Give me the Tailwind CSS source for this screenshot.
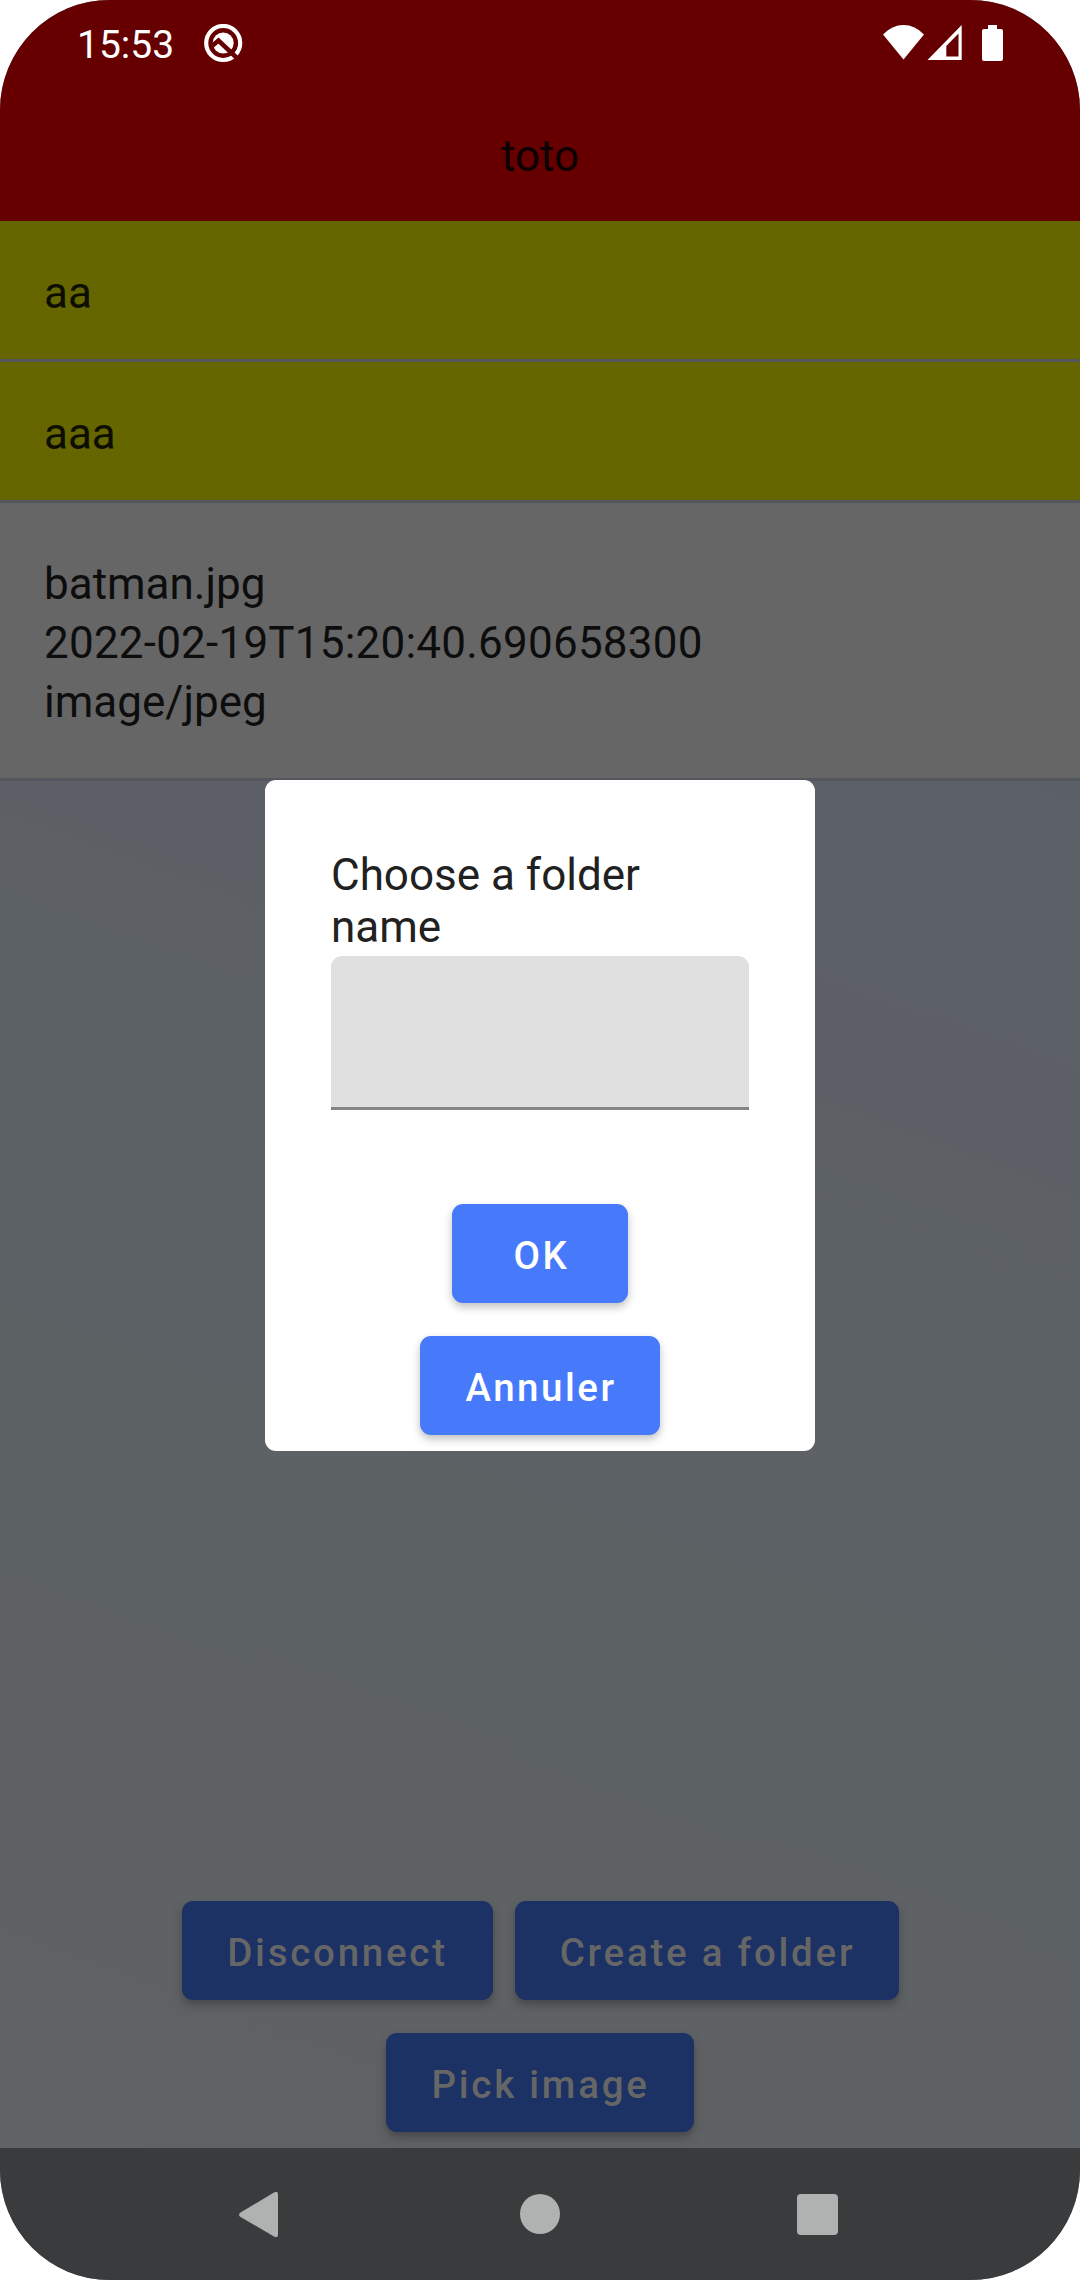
<!DOCTYPE html>
<html lang="fr">
<head>
<meta charset="utf-8">
<title>toto</title>
<script src="https://cdn.jsdelivr.net/npm/@tailwindcss/browser@4"></script>
</head>
<body class="bg-white">
<div class="relative flex h-[2280px] w-[1080px] flex-col overflow-hidden rounded-[110px] bg-linear-200 from-[#5c5f68] from-20% via-[#5d6265] via-65% to-[#606265] to-97% font-['Roboto',sans-serif] text-[44px] leading-[59px] tracking-normal text-[#0d0d0d]">
  <header class="flex h-[221px] flex-col bg-[#660000]">
    <div class="flex h-[88px] items-center pl-[77px] pr-[77px] text-white">
      <span class="w-[98px] pt-[2px] text-[39px] leading-[46px]">15:53</span>
      <svg class="ml-[29px] mb-[2px] size-[39px]" viewBox="0 0 39 39" fill="none">
        <circle cx="19.2" cy="19" r="17" stroke="#fff" stroke-width="4.2"/>
        <circle cx="19.2" cy="19" r="10.500" fill="#fff"/>
        <path d="M7.500 22.500L14.500 16.500L34 35" stroke="#660000" stroke-width="4.500"/>
      </svg>
      <svg class="ml-auto mb-[2px] h-[36px] w-[120px]" viewBox="0 0 120 36" fill="#fff">
        <path d="M0 9.500Q9 0 20.500 0T41 9.500L20.500 34.500Z"/>
        <path fill-rule="evenodd" d="M78.700 0V35H44.500ZM75.500 8.500L63.300 21V31.500H75.500Z"/>
        <path d="M105 0h9v4h4q2 0 2 2v28q0 2-2 2h-17q-2 0-2-2V6q0-2 2-2h4Z"/>
      </svg>
    </div>
    <h1 class="mt-[39px] text-center text-[#0d0000]">toto</h1>
  </header>
  <ul class="flex flex-col">
    <li class="flex h-[141px] items-center border-b-3 border-[#53565c] bg-[#666600] px-[44px] pt-[6px] text-[#0d0d00]">aa</li>
    <li class="flex h-[141px] items-center border-b-3 border-[#53565c] bg-[#666600] px-[44px] pt-[6px] text-[#0d0d00]">aaa</li>
    <li class="flex h-[278px] flex-col justify-center border-b-3 border-[#53565c] bg-[#666666] px-[44px] pt-[6px]">
      <span>batman.jpg</span><span class="tracking-[0.22px]">2022-02-19T15:20:40.690658300</span><span>image/jpeg</span>
    </li>
  </ul>
  <div class="mt-auto flex flex-wrap justify-center gap-x-[22px] gap-y-[33px] px-[150px] pb-[16px] text-[38.5px] font-medium tracking-[2.75px] text-[#666666]">
    <button class="h-[99px] w-[311px] rounded-[11px] bg-[#1c3164] pl-[1px] pt-[3px] shadow-[0_5px_8px_rgba(50,45,50,0.5)]">Disconnect</button>
    <button class="h-[99px] w-[384px] rounded-[11px] bg-[#1c3164] pl-[2px] pt-[3px] shadow-[0_5px_8px_rgba(50,45,50,0.5)]">Create a folder</button>
    <button class="h-[99px] w-[308px] rounded-[11px] bg-[#1c3164] pl-[1px] pt-[3px] shadow-[0_5px_8px_rgba(50,45,50,0.5)]">Pick image</button>
  </div>
  <nav class="flex h-[132px] items-center bg-[#3a3b3d]">
    <svg class="h-[132px] w-[1080px]" viewBox="0 0 1080 132" fill="#b0b1b1">
      <path d="M240.500 64.500L274 44.500Q278 42.500 278 46.500V86.500Q278 90.500 274 88.500L240.500 69Q237.500 67 240.500 64.500Z"/>
      <circle cx="540" cy="66" r="20"/>
      <rect x="797" y="46" width="41" height="41" rx="4"/>
    </svg>
  </nav>

  <div class="absolute left-[265px] top-[780px] flex h-[671px] w-[550px] flex-col items-center rounded-[11px] bg-white px-[66px] pt-[69px] text-[#212121]">
    <p class="w-full leading-[52px]">Choose a folder<br>name</p>
    <div class="mt-[3px] h-[154px] w-full shrink-0 rounded-t-[11px] border-b-3 border-[#858585] bg-[#e0e0e0]"></div>
    <div class="mt-[94px] flex flex-col items-center gap-[33px] text-[38.5px] font-medium tracking-[2.5px] text-white">
      <button class="h-[99px] w-[176px] rounded-[11px] bg-[#467afb] pl-[3px] pt-[3px] shadow-[0_4px_8px_rgba(0,0,0,0.25)]">OK</button>
      <button class="h-[99px] w-[240px] rounded-[11px] bg-[#467afb] pl-[2px] pt-[3px] shadow-[0_4px_8px_rgba(0,0,0,0.25)]">Annuler</button>
    </div>
  </div>
</div>
</body>
</html>
